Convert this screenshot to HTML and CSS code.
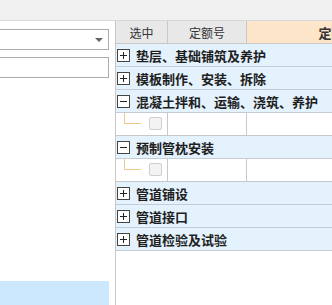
FILE: index.html
```html
<!DOCTYPE html>
<html lang="zh">
<head>
  <meta charset="UTF-8">
  <title>定额选择</title>
  <link rel="stylesheet" href="styles.css">
</head>
<body>
  <div class="topbar"></div>
  <div class="main">
    <div class="side">
      <div class="select">
        <span class="select-arrow"></span>
      </div>
      <div class="text-input"></div>
      <div class="side-item"></div>
    </div>

    <div class="grid">
      <div class="grid-head">
        <div class="cell col-check">选中</div>
        <div class="cell col-code">定额号</div>
        <div class="cell col-name sorted">定额名称</div>
      </div>

      <div class="group-row">
        <span class="toggle">
          <svg width="13" height="13" viewBox="0 0 13 13"><rect x="0.5" y="0.5" width="12" height="12" fill="#fff" stroke="#444"/><path d="M3 6.5h7M6.5 3v7" stroke="#222"/></svg>
        </span>
        <span class="group-title">垫层、基础铺筑及养护</span>
      </div>
      <div class="group-row">
        <span class="toggle">
          <svg width="13" height="13" viewBox="0 0 13 13"><rect x="0.5" y="0.5" width="12" height="12" fill="#fff" stroke="#444"/><path d="M3 6.5h7M6.5 3v7" stroke="#222"/></svg>
        </span>
        <span class="group-title">模板制作、安装、拆除</span>
      </div>
      <div class="group-row">
        <span class="toggle">
          <svg width="13" height="13" viewBox="0 0 13 13"><rect x="0.5" y="0.5" width="12" height="12" fill="#fff" stroke="#444"/><path d="M3 6.5h7" stroke="#222"/></svg>
        </span>
        <span class="group-title">混凝土拌和、运输、浇筑、养护</span>
      </div>
      <div class="child-row">
        <div class="cell col-check">
          <span class="tree-line"></span>
          <span class="checkbox"></span>
        </div>
        <div class="cell col-code"></div>
        <div class="cell col-name"></div>
      </div>
      <div class="group-row">
        <span class="toggle">
          <svg width="13" height="13" viewBox="0 0 13 13"><rect x="0.5" y="0.5" width="12" height="12" fill="#fff" stroke="#444"/><path d="M3 6.5h7" stroke="#222"/></svg>
        </span>
        <span class="group-title">预制管枕安装</span>
      </div>
      <div class="child-row">
        <div class="cell col-check">
          <span class="tree-line"></span>
          <span class="checkbox"></span>
        </div>
        <div class="cell col-code"></div>
        <div class="cell col-name"></div>
      </div>
      <div class="group-row">
        <span class="toggle">
          <svg width="13" height="13" viewBox="0 0 13 13"><rect x="0.5" y="0.5" width="12" height="12" fill="#fff" stroke="#444"/><path d="M3 6.5h7M6.5 3v7" stroke="#222"/></svg>
        </span>
        <span class="group-title">管道铺设</span>
      </div>
      <div class="group-row">
        <span class="toggle">
          <svg width="13" height="13" viewBox="0 0 13 13"><rect x="0.5" y="0.5" width="12" height="12" fill="#fff" stroke="#444"/><path d="M3 6.5h7M6.5 3v7" stroke="#222"/></svg>
        </span>
        <span class="group-title">管道接口</span>
      </div>
      <div class="group-row">
        <span class="toggle">
          <svg width="13" height="13" viewBox="0 0 13 13"><rect x="0.5" y="0.5" width="12" height="12" fill="#fff" stroke="#444"/><path d="M3 6.5h7M6.5 3v7" stroke="#222"/></svg>
        </span>
        <span class="group-title">管道检验及试验</span>
      </div>
    </div>
  </div>
</body>
</html>
```

FILE: styles.css
```css
body {
  margin: 0;
  padding: 0;
  font-family: "Noto Sans CJK SC", "Liberation Sans", sans-serif;
  background: #ffffff;
  color: #222;
  height: 305px;
  overflow: hidden;
}

.topbar {
  height: 20px;
  background: #f0f0f0;
  border-bottom: 1px solid #d8d8d8;
}

.main {
  display: flex;
  height: 284px;
}

/* left panel */
.side {
  width: 116px;
  flex-shrink: 0;
  box-sizing: border-box;
  padding-right: 6px;
  border-right: 1px solid #c8c8c8;
  display: flex;
  flex-direction: column;
}

.select, .text-input {
  height: 26px;
  box-sizing: border-box;
  margin-left: -4px;
  border: 1px solid #ababab;
  background: #fff;
}

.select {
  margin-top: 8px;
  display: flex;
  align-items: center;
  justify-content: flex-end;
  padding-right: 5px;
}

.select-arrow {
  width: 0;
  height: 0;
  border-left: 4px solid transparent;
  border-right: 4px solid transparent;
  border-top: 4px solid #666;
  margin-top: 1px;
}

.text-input {
  margin-top: 7px;
}

.side-item {
  margin-top: 203px;
  height: 24px;
  flex-shrink: 0;
  background: #cce8ff;
}

/* grid */
.grid {
  flex: 1;
  overflow: hidden;
  min-width: 0;
}

.grid-head, .child-row {
  display: flex;
  height: 23px;
  box-sizing: border-box;
  border-bottom: 1px solid #c8c8c8;
  width: 500px;
}

.cell {
  flex-shrink: 0;
  box-sizing: border-box;
  border-right: 1px solid #c8c8c8;
  height: 100%;
}

.col-check { width: 52px; }
.col-code { width: 79px; }
.col-name { width: 196px; }

.grid-head .cell {
  background: #e8e8e8;
  color: #333;
  font-size: 12px;
  display: flex;
  align-items: center;
  justify-content: center;
}

.grid-head .sorted {
  background: #fde5c9;
  font-weight: bold;
  font-size: 13px;
}

.group-row {
  display: flex;
  align-items: center;
  height: 23px;
  box-sizing: border-box;
  background: #e4f2fd;
  border-bottom: 1px solid #c5ccd3;
  width: 500px;
}

.toggle {
  display: flex;
  margin-left: 1px;
  margin-right: 6px;
}

.group-title {
  font-size: 13px;
  font-weight: bold;
  color: #1e1e1e;
  white-space: nowrap;
}

.child-row .col-check {
  display: flex;
  align-items: flex-start;
}

.tree-line {
  width: 17px;
  height: 11px;
  margin-left: 8px;
  box-sizing: border-box;
  border-left: 1px solid #f1c98e;
  border-bottom: 1px solid #f1c98e;
}

.checkbox {
  width: 13px;
  height: 13px;
  margin-top: 4px;
  margin-left: 8px;
  box-sizing: border-box;
  border: 1px solid #cfcfcf;
  border-radius: 2px;
  background: #f3f3f3;
}
```
